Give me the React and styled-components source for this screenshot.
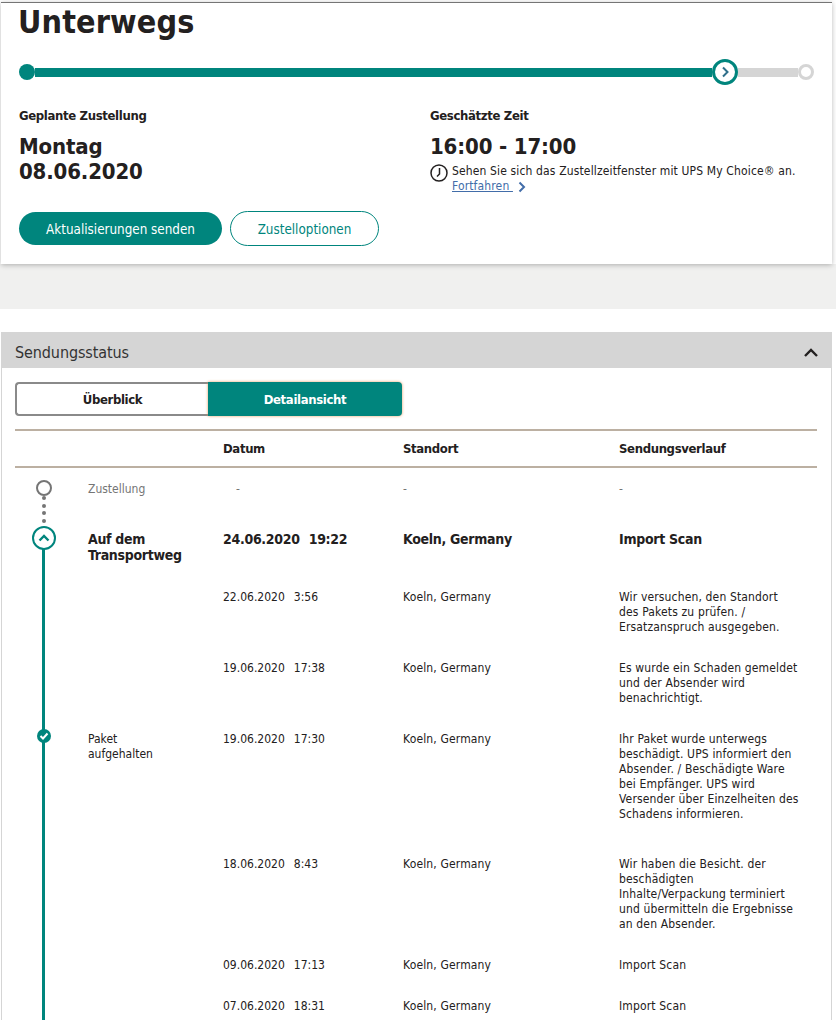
import React from "react";
import styled, { createGlobalStyle } from "styled-components";

const TEAL = "#00857d";
const GREY = "#d5d5d5";

const Global = createGlobalStyle`
  html, body { margin: 0; padding: 0; height: 1020px; overflow: hidden; background: #fff; }
  body { font-family: "DejaVu Sans Condensed", "DejaVu Sans", sans-serif; font-stretch: condensed; color: #232020; }
  * { box-sizing: border-box; }
`;

const Page = styled.div`
  width: 836px;
  padding-top: 2px;
`;

const Card = styled.section`
  position: relative;
  width: 831px;
  height: 262px;
  margin-left: 1px;
  padding: 0 18px;
  background: #fff;
  border-top: 1px solid #757575;
  box-shadow: 0 1px 5px rgba(0, 0, 0, 0.28);
`;

const Title = styled.h1`
  margin: 0;
  font-size: 32px;
  line-height: 38px;
  font-weight: 700;
  letter-spacing: 0.15px;
  margin-left: -1px;
`;

const Progress = styled.div`
  display: flex;
  align-items: center;
  height: 26px;
  margin-top: 18px;
`;

const StartDot = styled.span`
  flex: none;
  width: 16px;
  height: 16px;
  border-radius: 50%;
  background: ${TEAL};
`;

const Bar = styled.span`
  height: 9px;
  width: ${(p) => p.$width}px;
  flex: none;
  background: ${(p) => p.$color};
`;

const Current = styled.span`
  flex: none;
  display: flex;
  align-items: center;
  justify-content: center;
  width: 26px;
  height: 26px;
  border-radius: 50%;
  border: 3px solid ${TEAL};
  background: #fff;
`;

const EndDot = styled.span`
  flex: none;
  width: 16px;
  height: 16px;
  border-radius: 50%;
  border: 3px solid ${GREY};
  background: #fff;
`;

const InfoGrid = styled.div`
  display: grid;
  grid-template-columns: 411px 1fr;
  margin-top: 22px;
`;

const Label = styled.div`
  font-size: 13px;
  line-height: 18px;
  font-weight: 700;
  letter-spacing: -0.35px;
`;

const Big = styled.div`
  margin-top: 9px;
  font-size: 22px;
  line-height: 25px;
  font-weight: 700;
  letter-spacing: -0.15px;
`;

const Note = styled.div`
  display: flex;
  gap: 4px;
  margin-top: 5px;
  font-size: 12px;
  line-height: 15px;
  letter-spacing: 0.14px;
  white-space: nowrap;
`;

const ClockIcon = styled.svg`
  flex: none;
  width: 18px;
  height: 18px;
`;

const MoreLink = styled.a`
  display: inline-flex;
  align-items: center;
  gap: 5px;
  color: #426da9;
  u { white-space: pre; }
`;

const Actions = styled.div`
  display: flex;
  align-items: center;
  gap: 8px;
  margin-top: 17px;
`;

const PillButton = styled.button`
  font: inherit;
  font-stretch: condensed;
  font-size: 13.33px;
  height: ${(p) => (p.$solid ? 33 : 35)}px;
  width: ${(p) => (p.$solid ? 203 : 149)}px;
  padding: 1px 0 0;
  border-radius: 18px;
  border: ${(p) => (p.$solid ? "none" : `1px solid ${TEAL}`)};
  background: ${(p) => (p.$solid ? TEAL : "#fff")};
  color: ${(p) => (p.$solid ? "#fff" : TEAL)};
`;

const Band = styled.div`
  height: 45px;
  background: #f0f0ef;
`;

const Spacer = styled.div`
  height: 23px;
`;

const Status = styled.section`
  width: 831px;
  margin-left: 1px;
  border-right: 1px solid ${GREY};
  border-left: 1px solid ${GREY};
`;

const StatusHead = styled.header`
  display: flex;
  align-items: center;
  justify-content: space-between;
  height: 36px;
  margin: 0 -1px;
  padding: 4px 14px 0;
  background: ${GREY};
  font-size: 16px;
  letter-spacing: -0.1px;
  color: #333;
`;

const StatusBody = styled.div`
  padding: 14px 14px 0 13px;
`;

const Tabs = styled.div`
  display: flex;
  width: 387px;
  height: 34px;
`;

const Tab = styled.button`
  flex: none;
  width: ${(p) => (p.$active ? 194 : 193)}px;
  font: inherit;
  font-stretch: condensed;
  font-size: 13px;
  font-weight: 700;
  letter-spacing: -0.35px;
  padding: 1px 0 0;
  border: ${(p) => (p.$active ? "none" : "2px solid #8a8a8a")};
  border-right: none;
  border-radius: ${(p) => (p.$active ? "0 4px 4px 0" : "4px 0 0 4px")};
  background: ${(p) => (p.$active ? TEAL : "#fff")};
  color: ${(p) => (p.$active ? "#fff" : "#232020")};
  box-shadow: ${(p) => (p.$active ? "0 0 3px #e59a5c" : "none")};
`;

const Table = styled.div`
  margin-top: 13px;
`;

const Columns = "73px 135px 180px 216px 198px";

const HeadRow = styled.div`
  display: grid;
  grid-template-columns: ${Columns};
  height: 39px;
  align-items: center;
  border-top: 2px solid #bcb0a2;
  border-bottom: 2px solid #bcb0a2;
  font-size: 13px;
  font-weight: 700;
  letter-spacing: -0.35px;
`;

const Row = styled.div`
  display: grid;
  grid-template-columns: ${Columns};
  height: ${(p) => (p.$height ? `${p.$height}px` : "auto")};
  font-size: ${(p) => (p.$major ? 14 : 12)}px;
  line-height: ${(p) => (p.$major ? 16 : 15)}px;
  font-weight: ${(p) => (p.$major ? 700 : 400)};
  letter-spacing: ${(p) => (p.$major ? "-0.3px" : "0")};
  color: ${(p) => (p.$muted ? "#757575" : "#232020")};
`;

const Rail = styled.div`
  position: relative;
  &::before {
    content: "";
    display: ${(p) => (p.$line ? "block" : "none")};
    position: absolute;
    top: 0;
    bottom: 0;
    left: 27px;
    width: 3px;
    background: ${TEAL};
  }
`;

const RailNode = styled.div`
  position: absolute;
  left: 28.5px;
  top: ${(p) => p.$top}px;
  transform: translateX(-50%);
  display: flex;
  flex-direction: column;
  align-items: center;
`;

const Ring = styled.span`
  width: 16px;
  height: 16px;
  border: 2.5px solid #757575;
  border-radius: 50%;
`;

const Dot = styled.span`
  width: 4px;
  height: 4px;
  margin-top: ${(p) => p.$gap}px;
  border-radius: 50%;
  background: #757575;
`;

const Open = styled.span`
  display: flex;
  align-items: center;
  justify-content: center;
  width: 24px;
  height: 24px;
  border: 2px solid ${TEAL};
  border-radius: 50%;
  background: #fff;
`;

const Done = styled.span`
  display: flex;
  align-items: center;
  justify-content: center;
  width: 14px;
  height: 14px;
  border-radius: 50%;
  background: ${TEAL};
`;

const Cell = styled.div`
  padding-top: ${(p) => p.$top || 0}px;
  padding-bottom: ${(p) => p.$bottom ?? 26}px;
  padding-left: ${(p) => p.$indent || 0}px;
  white-space: nowrap;
`;

const WideCell = styled(Cell)`
  letter-spacing: 0.15px;
`;

const Time = styled.span`
  margin-left: 9px;
`;

const Lines = ({ items }) =>
  items.map((line, i) => (
    <React.Fragment key={i}>
      {i > 0 && <br />}
      {line}
    </React.Fragment>
  ));

const rows = [
  { date: "22.06.2020", time: "3:56", hist: ["Wir versuchen, den Standort", "des Pakets zu prüfen. /", "Ersatzanspruch ausgegeben."] },
  { date: "19.06.2020", time: "17:38", hist: ["Es wurde ein Schaden gemeldet", "und der Absender wird", "benachrichtigt."] },
  {
    date: "19.06.2020",
    time: "17:30",
    done: true,
    status: ["Paket", "aufgehalten"],
    bottom: 35,
    hist: ["Ihr Paket wurde unterwegs", "beschädigt. UPS informiert den", "Absender. / Beschädigte Ware", "bei Empfänger. UPS wird", "Versender über Einzelheiten des", "Schadens informieren."],
  },
  { date: "18.06.2020", time: "8:43", hist: ["Wir haben die Besicht. der", "beschädigten", "Inhalte/Verpackung terminiert", "und übermitteln die Ergebnisse", "an den Absender."] },
  { date: "09.06.2020", time: "17:13", hist: ["Import Scan"] },
  { date: "07.06.2020", time: "18:31", hist: ["Import Scan"] },
];

export default function App() {
  return (
    <Page>
      <Global />
      <Card>
        <Title>Unterwegs</Title>
        <Progress>
          <StartDot />
          <Bar $color={TEAL} $width={677} />
          <Current>
            <svg width="10" height="12" viewBox="0 0 10 12" fill="none">
              <path d="M3 1.500 7.500 6 3 10.500" stroke="#2f6f8a" strokeWidth="2" />
            </svg>
          </Current>
          <Bar $color={GREY} $width={60} />
          <EndDot />
        </Progress>
        <InfoGrid>
          <div>
            <Label>Geplante Zustellung</Label>
            <Big>
              Montag
              <br />
              08.06.2020
            </Big>
          </div>
          <div>
            <Label>Geschätzte Zeit</Label>
            <Big>16:00 - 17:00</Big>
            <Note>
              <ClockIcon viewBox="0 0 18 18" fill="none" stroke="#232020">
                <circle cx="9" cy="9" r="8" strokeWidth="1.500" />
                <path d="M9.500 4v6L7 12.500" strokeWidth="1.500" />
              </ClockIcon>
              <div>
                Sehen Sie sich das Zustellzeitfenster mit UPS My Choice® an.
                <br />
                <MoreLink>
                  <u>Fortfahren </u>
                  <svg width="8" height="12" viewBox="0 0 8 12" fill="none">
                    <path d="M1.500 1.500 6 6l-4.500 4.500" stroke="#426da9" strokeWidth="2" />
                  </svg>
                </MoreLink>
              </div>
            </Note>
          </div>
        </InfoGrid>
        <Actions>
          <PillButton $solid>Aktualisierungen senden</PillButton>
          <PillButton>Zustelloptionen</PillButton>
        </Actions>
      </Card>
      <Band />
      <Spacer />
      <Status>
        <StatusHead>
          Sendungsstatus
          <svg width="14" height="9" viewBox="0 0 14 9" fill="none">
            <path d="M1 8l6-6 6 6" stroke="#232020" strokeWidth="2.400" />
          </svg>
        </StatusHead>
        <StatusBody>
          <Tabs>
            <Tab>Überblick</Tab>
            <Tab $active>Detailansicht</Tab>
          </Tabs>
          <Table>
            <HeadRow>
              <span />
              <span />
              <span>Datum</span>
              <span>Standort</span>
              <span>Sendungsverlauf</span>
            </HeadRow>
            <Row $muted $height={59}>
              <Rail>
                <RailNode $top={12}>
                  <Ring />
                  <Dot $gap={0} />
                  <Dot $gap={3.5} />
                  <Dot $gap={3.5} />
                  <Dot $gap={3.5} />
                </RailNode>
              </Rail>
              <Cell $top={14}>Zustellung</Cell>
              <Cell $top={14} $indent={13}>-</Cell>
              <Cell $top={14}>-</Cell>
              <Cell $top={14}>-</Cell>
            </Row>
            <Row $major $height={63}>
              <Rail $line>
                <RailNode $top={-1}>
                  <Open>
                    <svg width="12" height="8" viewBox="0 0 12 8" fill="none">
                      <path d="M1.500 6.500 6 2l4.500 4.500" stroke={TEAL} strokeWidth="2.400" />
                    </svg>
                  </Open>
                </RailNode>
              </Rail>
              <Cell $bottom={0} $top={4}>
                Auf dem
                <br />
                Transportweg
              </Cell>
              <Cell $bottom={0} $top={4}>
                24.06.2020<Time>19:22</Time>
              </Cell>
              <Cell $bottom={0} $top={4}>Koeln, Germany</Cell>
              <Cell $bottom={0} $top={4}>Import Scan</Cell>
            </Row>
            {rows.map((r, i) => (
              <Row key={i}>
                <Rail $line>
                  {r.done && (
                    <RailNode $top={-3}>
                      <Done>
                        <svg width="10" height="8" viewBox="0 0 10 8" fill="none">
                          <path d="M1.500 4 4 6.500 8.500 1.500" stroke="#fff" strokeWidth="2" />
                        </svg>
                      </Done>
                    </RailNode>
                  )}
                </Rail>
                <Cell $bottom={r.bottom}>{r.status && <Lines items={r.status} />}</Cell>
                <Cell $bottom={r.bottom}>
                  {r.date}
                  <Time>{r.time}</Time>
                </Cell>
                <WideCell $bottom={r.bottom}>Koeln, Germany</WideCell>
                <WideCell $bottom={r.bottom}>
                  <Lines items={r.hist} />
                </WideCell>
              </Row>
            ))}
          </Table>
        </StatusBody>
      </Status>
    </Page>
  );
}
